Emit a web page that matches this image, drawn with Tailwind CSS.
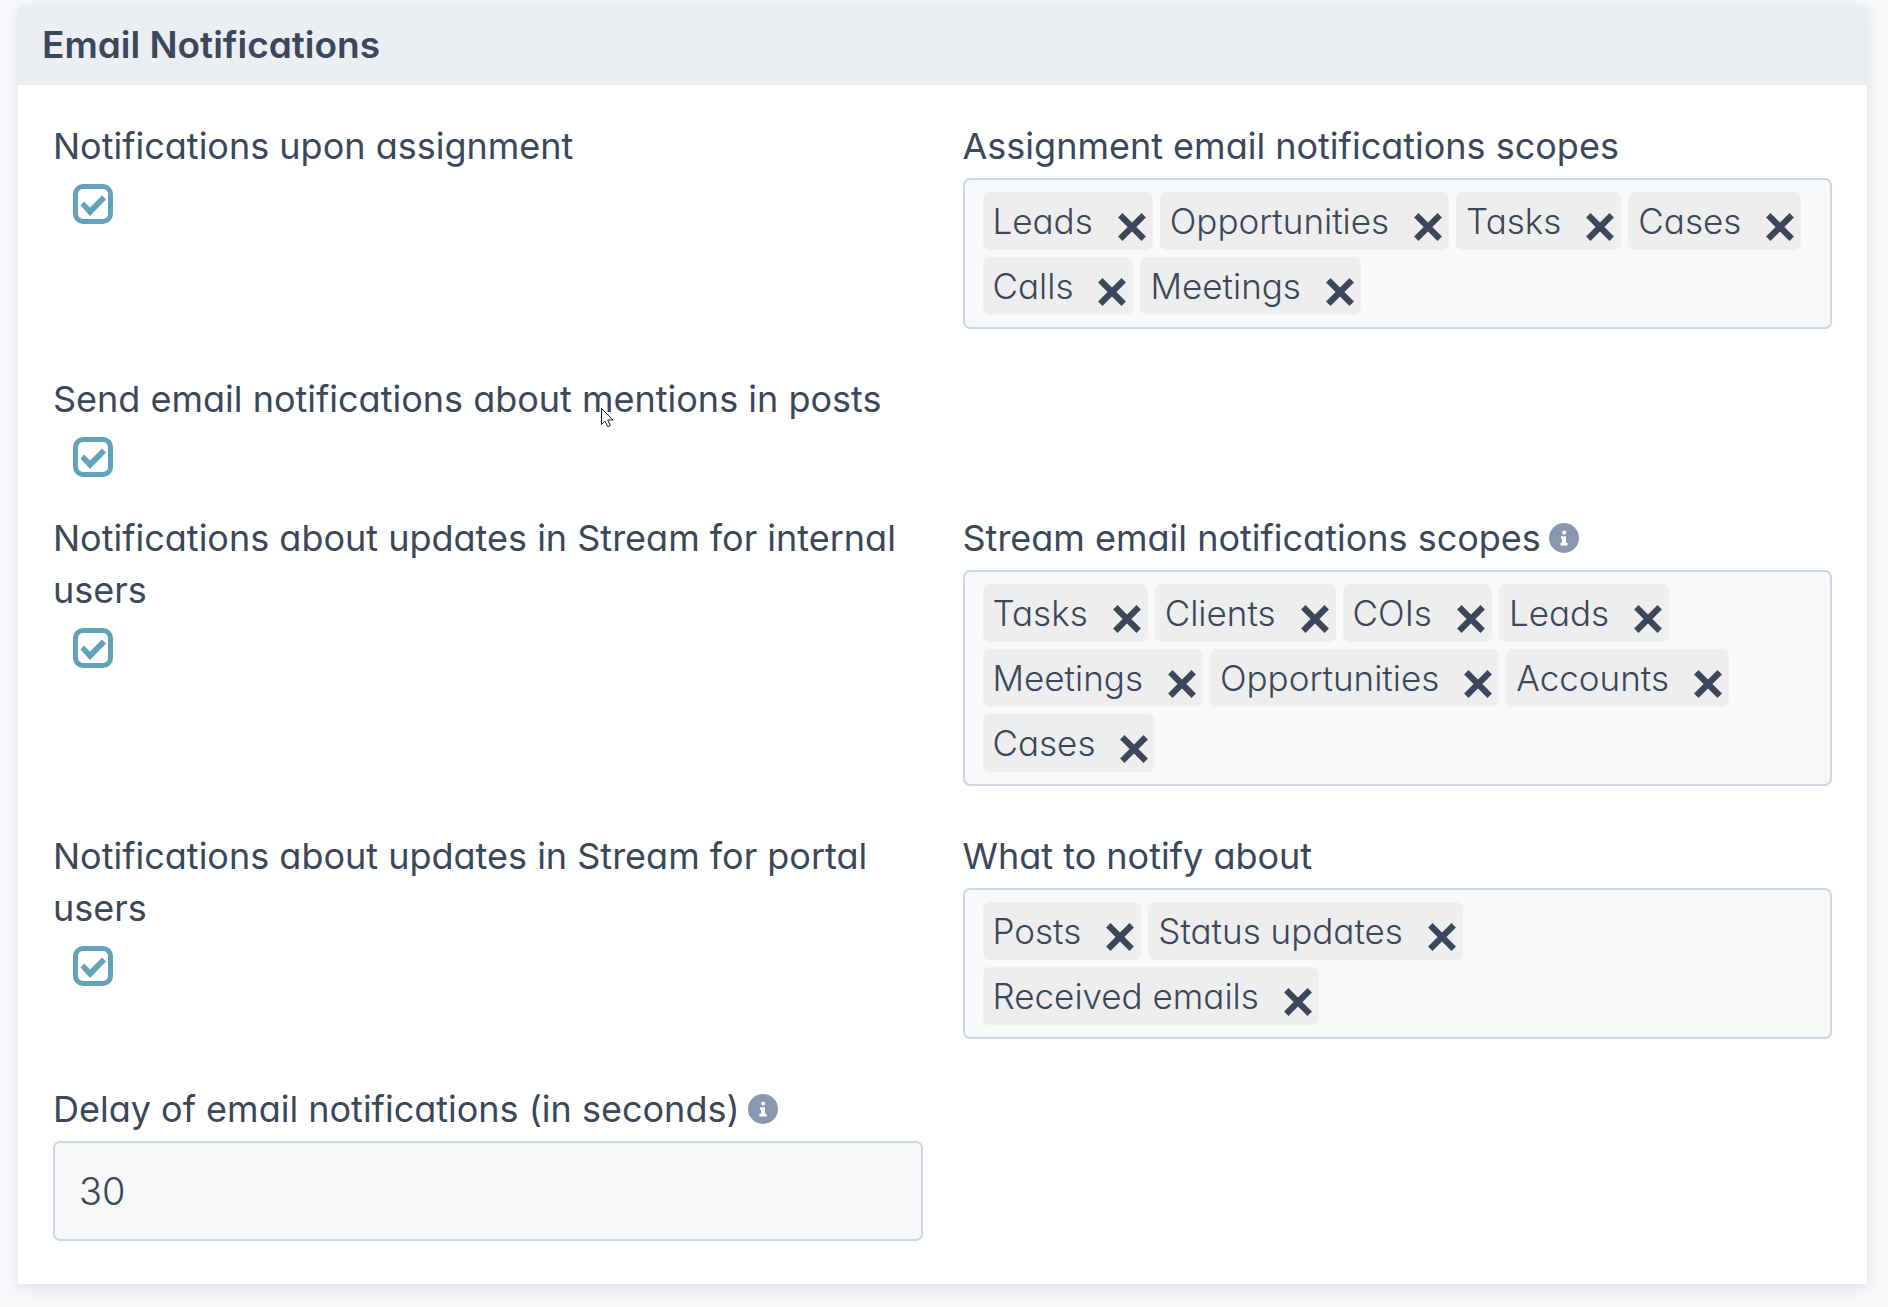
<!DOCTYPE html>
<html lang="en">
<head>
<meta charset="utf-8">
<title>Email Notifications</title>
<script src="https://cdn.jsdelivr.net/npm/@tailwindcss/browser@4"></script>
</head>
<body class="min-h-screen bg-[#f7f8fa] px-[18px] pt-[5px] pr-[21px] pb-6 font-['Inter',sans-serif] text-[36px] leading-[52px] text-[#3b475a] [font-feature-settings:'cv11']">
<svg class="hidden" aria-hidden="true">
  <symbol id="times" viewBox="0 0 28 28"><path d="M2.300 2.300 25.700 25.700M25.700 2.300 2.300 25.700" fill="none" stroke="currentColor" stroke-width="6.2"/></symbol>
  <symbol id="check" viewBox="0 0 40 40"><path d="M7.5 21.5 11 17.5 17 23.5 29 11.5 33 15.5 17 32Z" fill="currentColor"/></symbol>
  <symbol id="info" viewBox="0 0 30 30"><circle cx="15" cy="15" r="15" fill="currentColor"/><circle cx="15.2" cy="9.6" r="2.1" fill="#fff"/><path d="M12 13.2h5v6.6h1.6v2.6h-7.200v-2.600h1.600v-4h-1z" fill="#fff"/></symbol>
</svg>
<main class="rounded-t-[5px] bg-white shadow-[0_4px_16px_rgba(59,71,110,0.12)]">
  <header class="flex h-20 items-center rounded-t-[5px] bg-[#ebeef3] px-6">
    <h1 class="text-[37px] font-semibold">Email Notifications</h1>
  </header>
  <form class="grid grid-cols-2 gap-x-10 gap-y-[35px] px-[35px] pt-[35px] pb-[43px]">
    <div>
      <label for="assign" class="mb-3 block">Notifications upon assignment</label>
      <div class="ml-5 grid size-10"><input id="assign" type="checkbox" checked class="col-start-1 row-start-1 size-10 appearance-none rounded-[10px] border-5 border-[#60a3bb]"><svg class="pointer-events-none col-start-1 row-start-1 size-10 text-[#60a3bb]"><use href="#check"/></svg></div>
    </div>
    <div class="mb-[9px]">
      <div class="mb-[6px]" id="assign-scopes">Assignment email notifications scopes</div>
      <ul aria-labelledby="assign-scopes" class="flex flex-wrap gap-[7px] rounded-[7px] border-2 border-[#cfd6e4] bg-[#f7f8fa] pt-3 pr-2 pb-3 pl-[18px] text-[35px] font-light">
        <li class="flex h-[58px] items-center gap-[25px] rounded-[7px] bg-[#eee] pr-[7px] pl-[10px]">Leads<button type="button" aria-label="Remove Leads" class="mt-3"><svg class="size-7"><use href="#times"/></svg></button></li>
        <li class="flex h-[58px] items-center gap-[25px] rounded-[7px] bg-[#eee] pr-[7px] pl-[10px]">Opportunities<button type="button" aria-label="Remove Opportunities" class="mt-3"><svg class="size-7"><use href="#times"/></svg></button></li>
        <li class="flex h-[58px] items-center gap-[25px] rounded-[7px] bg-[#eee] pr-[7px] pl-[10px]">Tasks<button type="button" aria-label="Remove Tasks" class="mt-3"><svg class="size-7"><use href="#times"/></svg></button></li>
        <li class="flex h-[58px] items-center gap-[25px] rounded-[7px] bg-[#eee] pr-[7px] pl-[10px]">Cases<button type="button" aria-label="Remove Cases" class="mt-3"><svg class="size-7"><use href="#times"/></svg></button></li>
        <li class="flex h-[58px] items-center gap-[25px] rounded-[7px] bg-[#eee] pr-[7px] pl-[10px]">Calls<button type="button" aria-label="Remove Calls" class="mt-3"><svg class="size-7"><use href="#times"/></svg></button></li>
        <li class="flex h-[58px] items-center gap-[25px] rounded-[7px] bg-[#eee] pr-[7px] pl-[10px]">Meetings<button type="button" aria-label="Remove Meetings" class="mt-3"><svg class="size-7"><use href="#times"/></svg></button></li>
      </ul>
    </div>

    <div class="col-span-2">
      <label for="mentions" class="mb-3 block">Send email notifications about mentions in posts</label>
      <div class="ml-5 grid size-10"><input id="mentions" type="checkbox" checked class="col-start-1 row-start-1 size-10 appearance-none rounded-[10px] border-5 border-[#60a3bb]"><svg class="pointer-events-none col-start-1 row-start-1 size-10 text-[#60a3bb]"><use href="#check"/></svg></div>
    </div>

    <div>
      <label for="internal" class="mb-3 block">Notifications about updates in Stream for internal users</label>
      <div class="ml-5 grid size-10"><input id="internal" type="checkbox" checked class="col-start-1 row-start-1 size-10 appearance-none rounded-[10px] border-5 border-[#60a3bb]"><svg class="pointer-events-none col-start-1 row-start-1 size-10 text-[#60a3bb]"><use href="#check"/></svg></div>
    </div>
    <div class="mb-[9px]">
      <div class="mb-[6px] flex items-center gap-2"><span id="stream-scopes">Stream email notifications scopes</span><button type="button" aria-label="Help" class="text-[#8898b3]"><svg class="size-[30px]"><use href="#info"/></svg></button></div>
      <ul aria-labelledby="stream-scopes" class="flex flex-wrap gap-[7px] rounded-[7px] border-2 border-[#cfd6e4] bg-[#f7f8fa] pt-3 pr-2 pb-3 pl-[18px] text-[35px] font-light">
        <li class="flex h-[58px] items-center gap-[25px] rounded-[7px] bg-[#eee] pr-[7px] pl-[10px]">Tasks<button type="button" aria-label="Remove Tasks" class="mt-3"><svg class="size-7"><use href="#times"/></svg></button></li>
        <li class="flex h-[58px] items-center gap-[25px] rounded-[7px] bg-[#eee] pr-[7px] pl-[10px]">Clients<button type="button" aria-label="Remove Clients" class="mt-3"><svg class="size-7"><use href="#times"/></svg></button></li>
        <li class="flex h-[58px] items-center gap-[25px] rounded-[7px] bg-[#eee] pr-[7px] pl-[10px]">COIs<button type="button" aria-label="Remove COIs" class="mt-3"><svg class="size-7"><use href="#times"/></svg></button></li>
        <li class="flex h-[58px] items-center gap-[25px] rounded-[7px] bg-[#eee] pr-[7px] pl-[10px]">Leads<button type="button" aria-label="Remove Leads" class="mt-3"><svg class="size-7"><use href="#times"/></svg></button></li>
        <li class="flex h-[58px] items-center gap-[25px] rounded-[7px] bg-[#eee] pr-[7px] pl-[10px]">Meetings<button type="button" aria-label="Remove Meetings" class="mt-3"><svg class="size-7"><use href="#times"/></svg></button></li>
        <li class="flex h-[58px] items-center gap-[25px] rounded-[7px] bg-[#eee] pr-[7px] pl-[10px]">Opportunities<button type="button" aria-label="Remove Opportunities" class="mt-3"><svg class="size-7"><use href="#times"/></svg></button></li>
        <li class="flex h-[58px] items-center gap-[25px] rounded-[7px] bg-[#eee] pr-[7px] pl-[10px]">Accounts<button type="button" aria-label="Remove Accounts" class="mt-3"><svg class="size-7"><use href="#times"/></svg></button></li>
        <li class="flex h-[58px] items-center gap-[25px] rounded-[7px] bg-[#eee] pr-[7px] pl-[10px]">Cases<button type="button" aria-label="Remove Cases" class="mt-3"><svg class="size-7"><use href="#times"/></svg></button></li>
      </ul>
    </div>

    <div>
      <label for="portal" class="mb-3 block">Notifications about updates in Stream for portal users</label>
      <div class="ml-5 grid size-10"><input id="portal" type="checkbox" checked class="col-start-1 row-start-1 size-10 appearance-none rounded-[10px] border-5 border-[#60a3bb]"><svg class="pointer-events-none col-start-1 row-start-1 size-10 text-[#60a3bb]"><use href="#check"/></svg></div>
    </div>
    <div class="mb-[9px]">
      <div class="mb-[6px]" id="notify-about">What to notify about</div>
      <ul aria-labelledby="notify-about" class="flex flex-wrap gap-[7px] rounded-[7px] border-2 border-[#cfd6e4] bg-[#f7f8fa] pt-3 pr-16 pb-3 pl-[18px] text-[35px] font-light">
        <li class="flex h-[58px] items-center gap-[25px] rounded-[7px] bg-[#eee] pr-[7px] pl-[10px]">Posts<button type="button" aria-label="Remove Posts" class="mt-3"><svg class="size-7"><use href="#times"/></svg></button></li>
        <li class="flex h-[58px] items-center gap-[25px] rounded-[7px] bg-[#eee] pr-[7px] pl-[10px]">Status updates<button type="button" aria-label="Remove Status updates" class="mt-3"><svg class="size-7"><use href="#times"/></svg></button></li>
        <li class="flex h-[58px] items-center gap-[25px] rounded-[7px] bg-[#eee] pr-[7px] pl-[10px]">Received emails<button type="button" aria-label="Remove Received emails" class="mt-3"><svg class="size-7"><use href="#times"/></svg></button></li>
      </ul>
    </div>

    <div>
      <div class="mb-[6px] flex items-center gap-2"><label for="delay">Delay of email notifications (in seconds)</label><button type="button" aria-label="Help" class="text-[#8898b3]"><svg class="size-[30px]"><use href="#info"/></svg></button></div>
      <input id="delay" type="text" value="30" class="block h-[100px] w-full rounded-[7px] border-2 border-[#cfd6e4] bg-[#f7f8fa] px-6 text-[38px] font-light">
    </div>
  </form>
</main>
<!-- mouse pointer -->
<svg class="pointer-events-none absolute top-[408px] left-[601px] h-5 w-[13px]" viewBox="0 0 13 20"><path d="M.5.5v16l3.500-3.500 2.700 5.700 2.600-1.100-2.600-5.600h5.300z" fill="#fff" stroke="#1c2030"/></svg>
</body>
</html>
